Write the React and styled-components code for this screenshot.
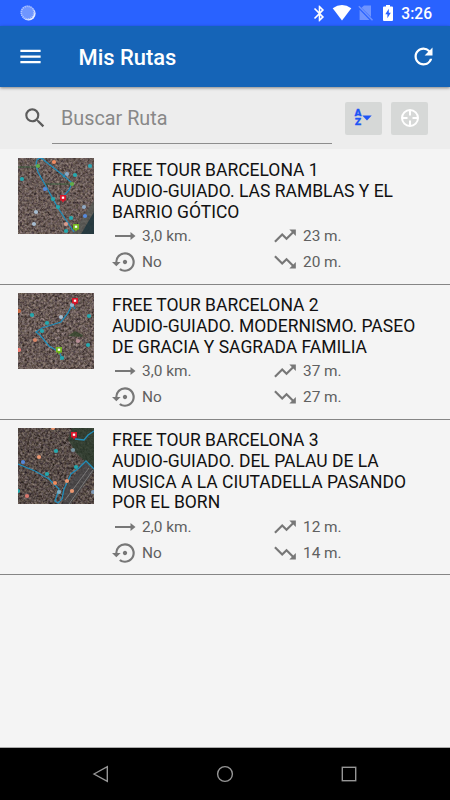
import React from 'react'
import styled, { createGlobalStyle } from 'styled-components'
import {
  MdMenu,
  MdRefresh,
  MdSearch,
  MdTrendingUp,
  MdTrendingDown,
  MdSettingsBackupRestore,
  MdBluetooth,
} from 'react-icons/md'

const routes = [
  {
    id: 1,
    title: ['FREE TOUR BARCELONA 1', 'AUDIO-GUIADO. LAS RAMBLAS Y EL', 'BARRIO GÓTICO'],
    distance: '3,0 km.',
    up: '23 m.',
    down: '20 m.',
    loop: 'No',
    map: {
      roads: ['M0 45L30 20L48 0', 'M0 62L38 50L50 76', 'M20 0L35 22L76 50', 'M32 66L76 10'],
      areas: [
        { d: 'M76 42L54 76H76Z', fill: '#555956' },
        { d: 'M76 54L63 76H76Z', fill: '#173039' },
        { d: 'M0 9H18M27 26H53', stroke: '#2e6338' },
      ],
      paths: ['M56 74L40 50L20 14Q17 6 19 2Q23-2 27 3L46 18L54 25L51 32L44 40', 'M45 19L49 14'],
      dots: [
        [36, 4, '#ef8c63'], [20, 8, '#63ad49'], [72, 8, '#2fa7b5'], [49, 16, '#8fa9c4'],
        [57, 17, '#24a8ae'], [4, 21, '#24a8ae'], [54, 26, '#63ad49'], [27, 31, '#5589dc'],
        [35, 41, '#24a8ae'], [40, 49, '#24a8ae'], [18, 54, '#a8bdd0'], [66, 49, '#8fa9c4'],
        [53, 60, '#24a8ae'], [16, 66, '#a8bdd0'], [48, 66, '#d89b8e'], [48, 73, '#24a8ae'],
        [67, 58, '#5589dc'],
      ],
      start: [58, 69],
      end: [45, 40],
    },
  },
  {
    id: 2,
    title: ['FREE TOUR BARCELONA 2', 'AUDIO-GUIADO. MODERNISMO. PASEO', 'DE GRACIA Y SAGRADA FAMILIA'],
    distance: '3,0 km.',
    up: '37 m.',
    down: '27 m.',
    loop: 'No',
    map: {
      roads: ['M0 10L76 76', 'M10 76L76 8', 'M0 45L38 8', 'M34 76L76 44', 'M28 0L76 42'],
      areas: [{ d: 'M50 43L57 38L65 42L64 44Z', fill: '#314629' }],
      paths: ['M57 10L54 12L50 20L43 29L24 35L18 39L22 42L31 53L41 59L44 65', 'M55 13L57 16'],
      dots: [
        [14, 22, '#24a8ae'], [29, 30, '#24a8ae'], [24, 38, '#24a8ae'], [43, 24, '#a8bdd0'],
        [54, 12, '#8fb7cf'], [71, 23, '#24a8ae'], [70, 52, '#24a8ae'], [44, 65, '#24a8ae'],
        [1, 57, '#f17b72'], [1, 18, '#c96b47'], [17, 47, '#d98566'], [60, 48, '#b88e95'],
      ],
      start: [41, 57],
      end: [57, 8],
    },
  },
  {
    id: 3,
    title: [
      'FREE TOUR BARCELONA 3',
      'AUDIO-GUIADO. DEL PALAU DE LA',
      'MUSICA A LA CIUTADELLA PASANDO',
      'POR EL BORN',
    ],
    distance: '2,0 km.',
    up: '12 m.',
    down: '14 m.',
    loop: 'No',
    map: {
      dark: true,
      roads: ['M34 0L76 42', 'M40 20L76 5', 'M62 0L76 14', 'M0 48L42 70', 'M42 76L72 42'],
      areas: [
        { d: 'M54 0H76V42L58 25L50 11Z', fill: '#283b2b' },
        { d: 'M67 34L76 43L53 76H45L46 62Z', fill: '#454548' },
        { d: 'M75 42L51 76M71 40L47 72', stroke: '#8e8c8b' },
      ],
      paths: ['M0 36L17 43L31 51L41 61L37 73L40 75L44 71L46 61L53 46L61 40L68 33L76 41', 'M76 3L70 7L66 12L57 11'],
      dots: [
        [35, 0, '#ec9770'], [38, 23, '#24a8ae'], [21, 29, '#ec9770'], [5, 34, '#5589dc'],
        [55, 22, '#7795a3'], [58, 39, '#24a8ae'], [29, 46, '#24a8ae'], [37, 55, '#ec8a5b'],
        [49, 53, '#ec9770'], [54, 63, '#ec9770'], [41, 64, '#7bafc5'], [0, 63, '#24a8ae'],
        [9, 68, '#d9776e'], [75, 64, '#809ab5'],
      ],
      end: [56, 7],
    },
  },
]

function MapThumb({ id, map }) {
  return (
    <Thumb viewBox="0 0 76 76">
      <filter id={`ground${id}`} x="0" y="0" width="100%" height="100%" colorInterpolationFilters="sRGB">
        <feTurbulence type="fractalNoise" baseFrequency="0.43" numOctaves="3" seed={id * 7} />
        <feColorMatrix
          values={
            map.dark
              ? '.5 .3 0 0 -.06  .5 .25 0 0 -.08  .45 .25 .1 0 -.12  0 0 0 0 1'
              : '.5 .3 0 0 0  .5 .25 0 0 -.03  .45 .25 .1 0 -.07  0 0 0 0 1'
          }
        />
      </filter>
      <rect width="76" height="76" filter={`url(#ground${id})`} />
      {map.roads.map((d) => (
        <path key={d} d={d} fill="none" stroke="#a29c9a" strokeWidth=".6" opacity=".35" />
      ))}
      {map.areas.map((a) => (
        <path key={a.d} d={a.d} fill={a.fill || 'none'} stroke={a.stroke} opacity=".75" />
      ))}
      {map.paths.map((d) => (
        <path key={d} d={d} fill="none" stroke="#228db9" strokeWidth="1.3" />
      ))}
      {map.dots.map(([x, y, color]) => (
        <circle key={`${x}-${y}`} cx={x} cy={y} r="2.1" fill={color} />
      ))}
      {map.start && <Pin x={map.start[0]} y={map.start[1]} color="#74b71e" />}
      <Pin x={map.end[0]} y={map.end[1]} color="#d9152a" />
    </Thumb>
  )
}

function Pin({ x, y, color }) {
  return (
    <g transform={`translate(${x} ${y})`}>
      <path d="M-3-3H3V2.4H1.4L0 4.5L-1.4 2.4H-3Z" fill={color} />
      <rect x="-1.2" y="-1.4" width="2.4" height="2.2" fill="#fff" />
    </g>
  )
}

function StatusBar() {
  return (
    <Status>
      <svg width="16" height="16" viewBox="0 0 16 16">
        <circle cx="8.6" cy="8.6" r="7" fill="#e9efff" />
        <circle cx="7.4" cy="7.3" r="6.9" fill="#6f96ff" />
        <circle cx="7.6" cy="7.6" r="6.3" fill="none" stroke="#b3c7ff" strokeWidth="1.6" strokeDasharray="1 1" />
      </svg>
      <StatusIcons>
        <MdBluetooth size={19} />
        <svg width="20" height="16" viewBox="0 0 20 16">
          <path d="M.7 3.3Q10-3.3 19.3 3.3L10 15.5Z" fill="#fff" />
        </svg>
        <svg width="16" height="16" viewBox="0 0 16 16">
          <path d="M6 .5H13V12L3.5 2.7ZM1.6 4.8L11.5 15H1.6Z" fill="#6f94ff" />
          <path d="M.8 1.2L14.5 15.2" stroke="#6f94ff" strokeWidth="1.4" />
        </svg>
        <svg width="10" height="16" viewBox="0 0 10 16">
          <path d="M3 0H7V1.5H9Q10 1.5 10 2.5V15Q10 16 9 16H1Q0 16 0 15V2.5Q0 1.5 1 1.5H3Z" fill="#fff" />
          <path d="M5.8 3.8L2.3 9.2H4.4V13.3L7.8 7.8H5.8Z" fill="#2962ff" />
        </svg>
        <Clock>3:26</Clock>
      </StatusIcons>
    </Status>
  )
}

function RouteRow({ route }) {
  return (
    <Row>
      <MapThumb id={route.id} map={route.map} />
      <Info>
        <RouteTitle>
          {route.title.map((line) => (
            <span key={line}>{line}</span>
          ))}
        </RouteTitle>
        <Stats>
          <Stat>
            <svg width="26" height="26" viewBox="0 0 26 26">
              <path d="M3 12.1H18.5V9L23.5 13L18.5 17V13.9H3Z" />
            </svg>
            {route.distance}
          </Stat>
          <Stat>
            <MdTrendingUp size={26} />
            {route.up}
          </Stat>
          <Stat>
            <MdSettingsBackupRestore size={26} />
            {route.loop}
          </Stat>
          <Stat>
            <MdTrendingDown size={26} />
            {route.down}
          </Stat>
        </Stats>
      </Info>
    </Row>
  )
}

export default function App() {
  return (
    <Screen>
      <GlobalStyle />
      <StatusBar />
      <Toolbar>
        <MdMenu size={27} />
        <h1>Mis Rutas</h1>
        <MdRefresh size={27} />
      </Toolbar>
      <SearchBar>
        <MdSearch size={26} color="#5c5c5c" />
        <SearchField>Buscar Ruta</SearchField>
        <ToolButton>
          <Letters>
            <span>A</span>
            <span>Z</span>
          </Letters>
          <svg width="10" height="6" viewBox="0 0 10 6">
            <path d="M.3.5H9.7L5 5.5Z" fill="#1f55f5" />
          </svg>
        </ToolButton>
        <ToolButton>
          <svg width="20" height="20" viewBox="0 0 20 20" fill="none" stroke="#fff" strokeWidth="2">
            <circle cx="10" cy="10" r="8" />
            <path d="M10 2V7.5M10 12.5V18M2 10H7.5M12.5 10H18" />
          </svg>
        </ToolButton>
      </SearchBar>
      <List>
        {routes.map((route) => (
          <RouteRow key={route.id} route={route} />
        ))}
      </List>
      <NavBar>
        <svg width="18" height="18" viewBox="0 0 18 18">
          <path d="M2 9L15.3 1.6V16.4Z" />
        </svg>
        <svg width="18" height="18" viewBox="0 0 18 18">
          <circle cx="9" cy="9" r="7.4" />
        </svg>
        <svg width="18" height="18" viewBox="0 0 18 18">
          <rect x="2.3" y="2.3" width="13.4" height="13.4" />
        </svg>
      </NavBar>
    </Screen>
  )
}

const GlobalStyle = createGlobalStyle`
  * {
    box-sizing: border-box;
  }
  body {
    margin: 0;
    font-family: Roboto, sans-serif;
  }
`

const Screen = styled.div`
  display: flex;
  flex-direction: column;
  width: 450px;
  height: 800px;
  overflow: hidden;
  background: #f4f4f4;
  svg {
    display: block;
    flex-shrink: 0;
  }
`

const Status = styled.div`
  display: flex;
  align-items: center;
  justify-content: space-between;
  flex: 0 0 26px;
  padding: 0 18px 0 20px;
  background: #2962ff;
  color: #fff;
`

const StatusIcons = styled.div`
  display: flex;
  align-items: center;
  svg:nth-child(1) {
    margin-right: 3px;
  }
  svg:nth-child(2) {
    margin-right: 6px;
  }
  svg:nth-child(3) {
    margin-right: 9px;
  }
  svg:nth-child(4) {
    margin-right: 8px;
  }
`

const Clock = styled.span`
  font-size: 15.6px;
  font-weight: 500;
  line-height: 29px;
  height: 26px;
`

const Toolbar = styled.header`
  display: flex;
  align-items: center;
  flex: 0 0 61px;
  padding: 0 13px 0 17px;
  background: #1564b7;
  color: #fff;
  box-shadow: 0 1px 3px rgba(0, 0, 0, 0.45);
  z-index: 1;
  h1 {
    flex: 1;
    margin: 0 0 0 34.5px;
    font-size: 21.9px;
    font-weight: 500;
    line-height: 30px;
    padding-top: 2px;
  }
`

const SearchBar = styled.div`
  display: flex;
  align-items: center;
  flex: 0 0 62px;
  padding: 0 22px;
  background: #ededed;
`

const SearchField = styled.div`
  width: 280px;
  height: 52px;
  margin: 0 13px 0 4px;
  padding-left: 9px;
  border-bottom: 1px solid #8d8d8d;
  color: #888;
  font-size: 19.8px;
  line-height: 53px;
`

const ToolButton = styled.button`
  display: flex;
  align-items: center;
  justify-content: center;
  width: 37px;
  height: 33px;
  padding: 0;
  border: 0;
  border-radius: 2px;
  background: #d6d8d7;
  & + & {
    margin-left: 9px;
  }
`

const Letters = styled.span`
  display: flex;
  flex-direction: column;
  margin-right: 1px;
  color: #1f55f5;
  font: bold 9px/9px 'DejaVu Sans', sans-serif;
  -webkit-text-stroke: 0.3px #1f55f5;
`

const List = styled.div`
  flex: 1;
  padding-top: 1px;
`

const Row = styled.div`
  display: flex;
  padding: 8px 18px 8.5px;
  border-bottom: 1px solid #858585;
`

const Thumb = styled.svg`
  width: 76px;
  height: 76px;
`

const Info = styled.div`
  flex: 1;
  margin-left: 18px;
`

const RouteTitle = styled.div`
  display: flex;
  flex-direction: column;
  padding-top: 2.2px;
  color: #111;
  font-size: 17.5px;
  line-height: 20.8px;
  white-space: nowrap;
`

const Stats = styled.div`
  display: grid;
  grid-template-columns: 160px 1fr;
  grid-auto-rows: 26px;
  padding-top: 0.8px;
`

const Stat = styled.div`
  display: flex;
  align-items: center;
  gap: 4px;
  color: #606060;
  font-size: 15.4px;
  &:nth-child(even) {
    gap: 5px;
  }
  svg {
    fill: #777;
  }
`

const NavBar = styled.nav`
  display: flex;
  align-items: center;
  justify-content: space-between;
  flex: 0 0 53px;
  padding: 0 92px;
  border-top: 1px solid #aaa;
  background: #000;
  svg {
    fill: none;
    stroke: #969696;
    stroke-width: 1.4;
  }
`
